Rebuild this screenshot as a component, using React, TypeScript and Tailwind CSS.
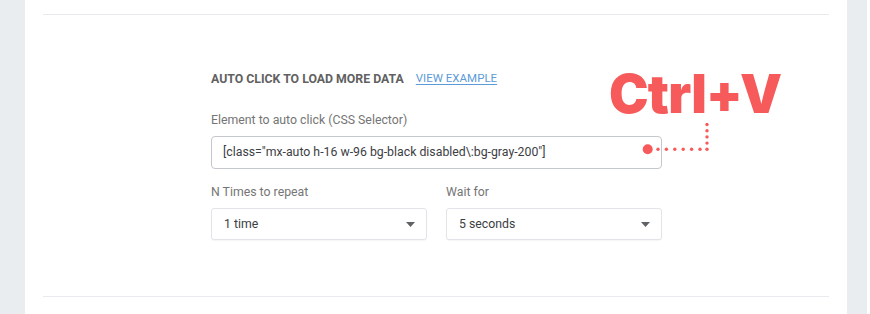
import React from "react";

function Caret() {
  return (
    <svg width="9" height="5" viewBox="0 0 9 5" className="shrink-0">
      <path d="M0 0 L9 0 L4.5 5 Z" fill="#5f6368" />
    </svg>
  );
}

function SelectBox({ value }: { value: string }) {
  return (
    <div className="flex h-[32px] w-[216px] items-center justify-between rounded-[3px] border border-[#e2e4e7] bg-white pl-[12px] pr-[11px] shadow-[0_1px_1px_rgba(0,0,0,0.04)]">
      <span className="text-[12.3px] text-[#3c4043]">{value}</span>
      <Caret />
    </div>
  );
}

function PasteHint() {
  const hDots = [658, 666.4, 674.8, 683.2, 691.6, 700, 707];
  const vDots = [124.5, 130.7, 136.9, 143.1];
  return (
    <>
      <div className="pointer-events-none absolute left-[399px] top-[-3px] font-['Inter',sans-serif] text-[53px] font-black leading-none tracking-[-0.8px] text-[#f75a5a]">
        Ctrl+V
      </div>
      <svg
        className="absolute left-[430px] top-[48px]"
        width="90"
        height="40"
        viewBox="640 119 90 40"
      >
        <circle cx="647.7" cy="149.3" r="5" fill="#f75a5a" />
        {hDots.map((x) => (
          <circle key={x} cx={x} cy="149.3" r="1.7" fill="#f75a5a" />
        ))}
        {vDots.map((y) => (
          <circle key={y} cx="707" cy={y} r="1.7" fill="#f75a5a" />
        ))}
      </svg>
    </>
  );
}

export default function App() {
  return (
    <div className="flex min-h-[314px] w-[870px] bg-[#e9edf0] font-['Roboto',sans-serif]">
      <div className="ml-[25px] w-[822px] bg-white px-[18px]">
        <div className="h-[14px]" />
        <div className="border-t border-[#e8eaed]" />

        <div className="relative mx-auto mt-[56px] w-[452px] pl-[1px]">
          <div className="flex h-[16px] items-center gap-[12px]">
            <span className="text-[12.3px] font-bold text-[#616161]">AUTO CLICK TO LOAD MORE DATA</span>
            <a href="#" className="text-[11.5px] text-[#5b9bd9] underline underline-offset-2">
              VIEW EXAMPLE
            </a>
          </div>

          <div className="mt-[25px] h-[16px] text-[12.3px] leading-[16px] text-[#757575]">
            Element to auto click (CSS Selector)
          </div>
          <div className="mt-[8px] flex h-[33px] items-center rounded-[4px] border border-[#c4c7cb] pl-[11px]">
            <span className="text-[12.3px] text-[#3c4043]">
              [class="mx-auto h-16 w-96 bg-black disabled\:bg-gray-200"]
            </span>
          </div>

          <div className="mt-[15px] flex gap-[19px]">
            <div>
              <div className="h-[16px] text-[12.3px] leading-[16px] text-[#757575]">N Times to repeat</div>
              <div className="mt-[8px]">
                <SelectBox value="1 time" />
              </div>
            </div>
            <div>
              <div className="h-[16px] text-[12.3px] leading-[16px] text-[#757575]">Wait for</div>
              <div className="mt-[8px]">
                <SelectBox value="5 seconds" />
              </div>
            </div>
          </div>

          <PasteHint />
        </div>

        <div className="mt-[56px] border-t border-[#e8eaed]" />
      </div>
      <div className="w-[20px] bg-[#e9edf0]" />
      <div className="flex-1 bg-white" />
    </div>
  );
}
